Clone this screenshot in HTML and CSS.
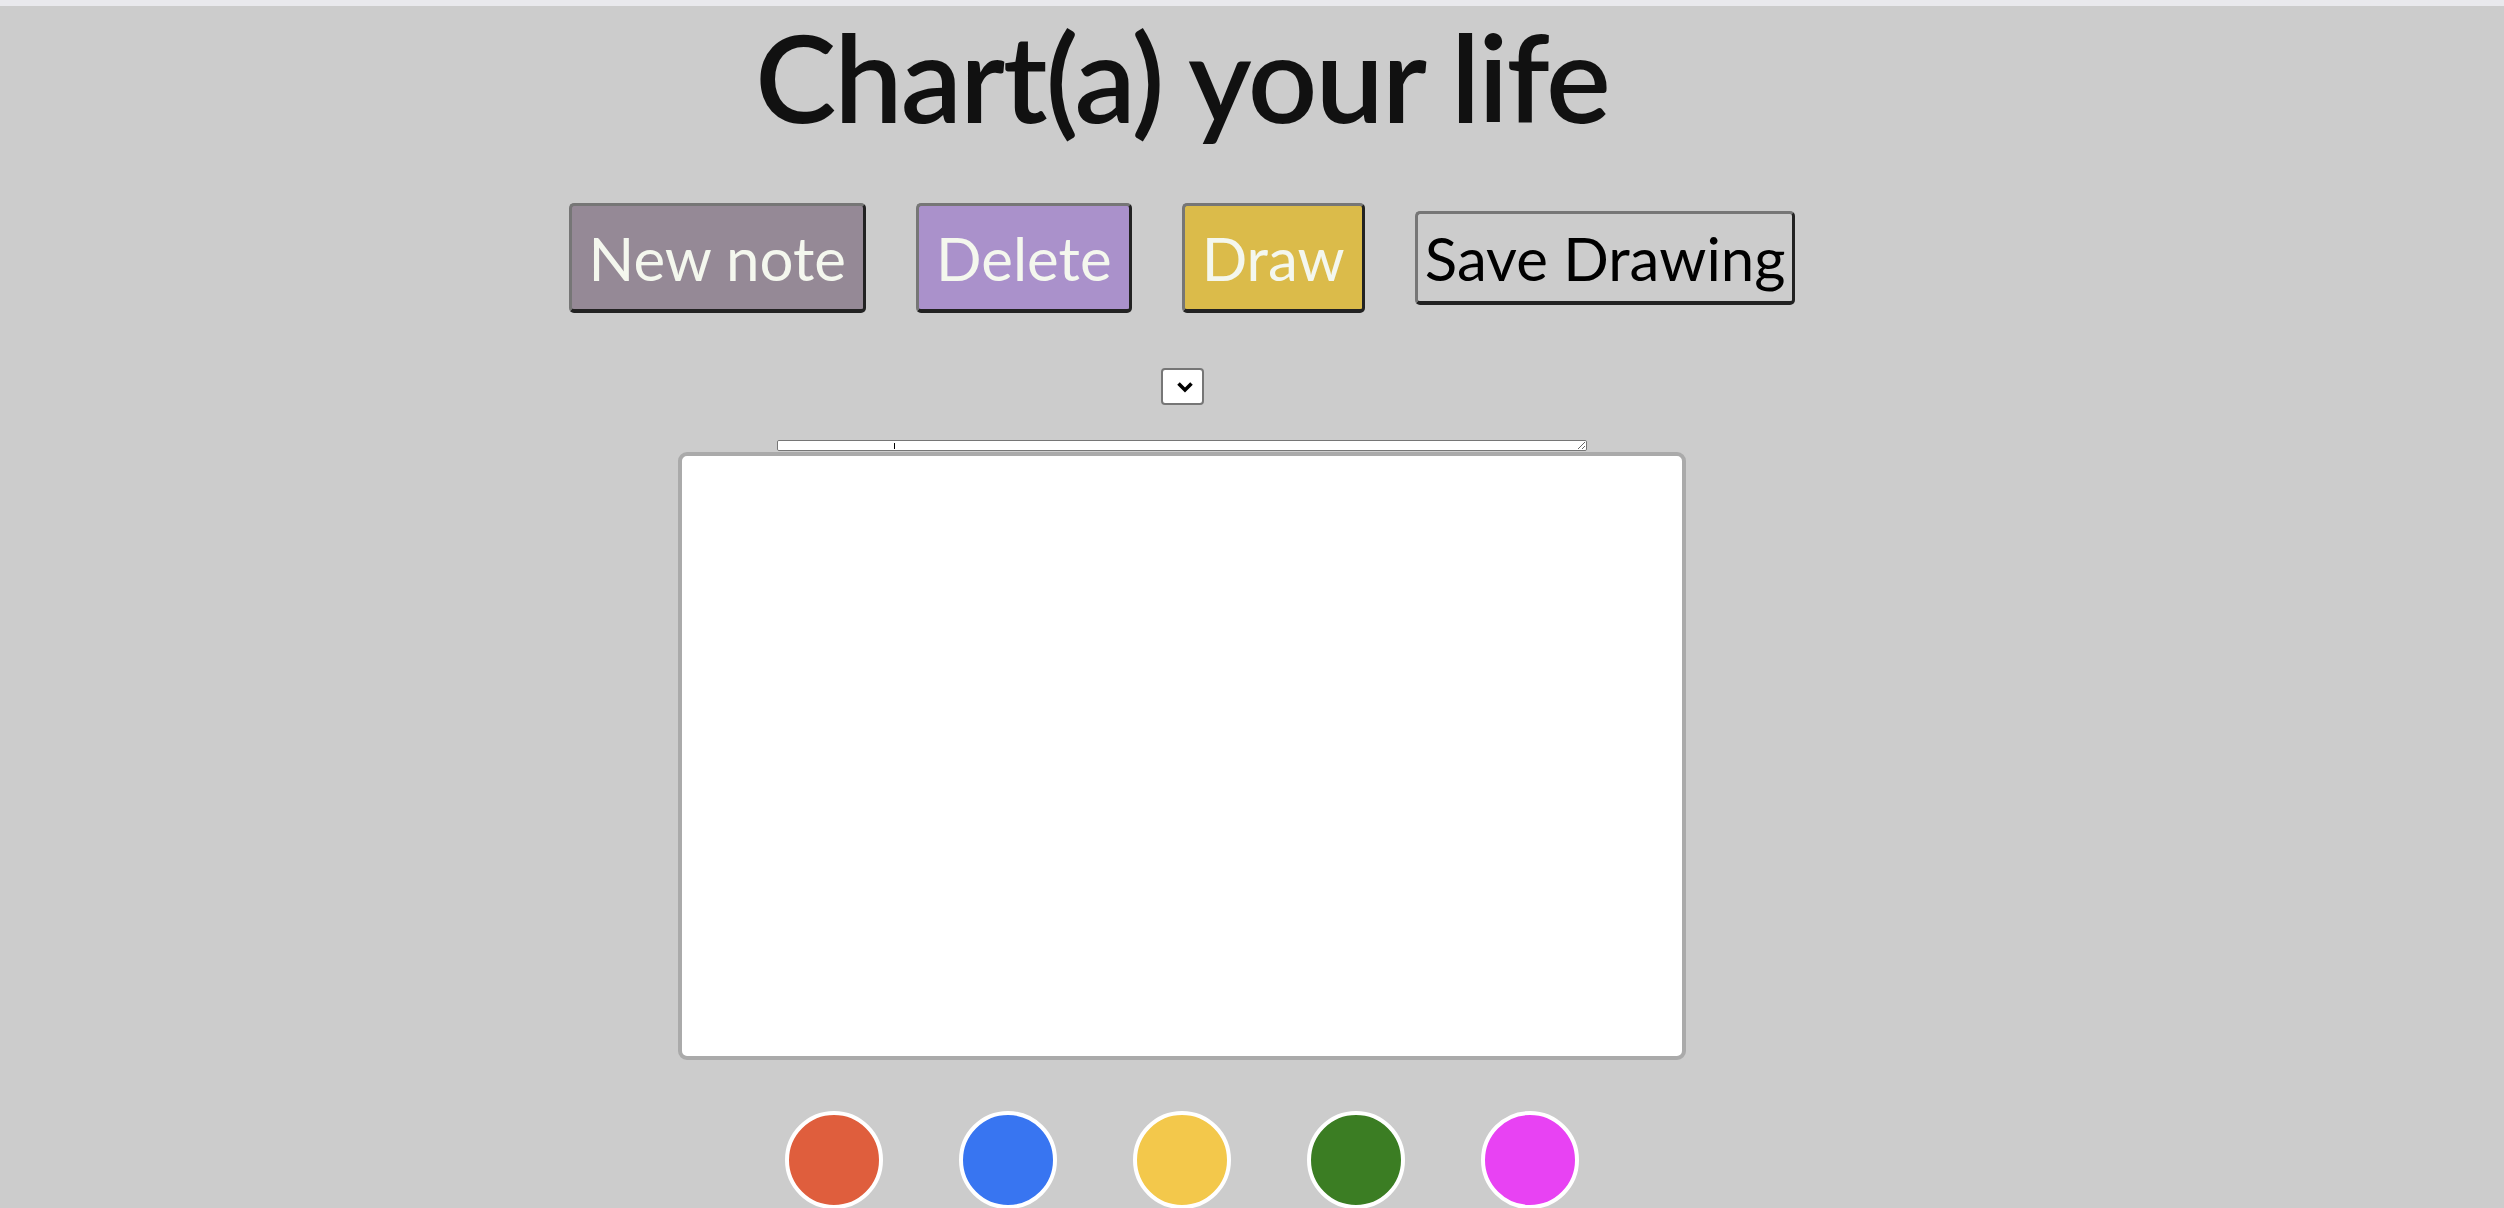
FILE: index.html
```html
<!DOCTYPE html>
<html lang="en">
<head>
<meta charset="utf-8">
<title>Chart(a) your life</title>
<link rel="stylesheet" href="styles.css">
</head>
<body>
<div class="strip"></div>
<main class="page">
  <h1 class="title">Chart(a) your life</h1>
  <div class="actions">
    <button class="btn btn-new">New note</button>
    <button class="btn btn-delete">Delete</button>
    <button class="btn btn-draw">Draw</button>
    <button class="btn btn-save">Save Drawing</button>
  </div>
  <div class="select" role="combobox" aria-label="Notes">
    <svg class="chev" width="18" height="12" viewBox="0 0 18 12"><path d="M2.5 2.5 L9 9 L15.5 2.5" fill="none" stroke="#000" stroke-width="3.6"/></svg>
  </div>
  <div class="note-wrap">
    <textarea class="note" aria-label="Note"></textarea>
    <span class="caret"></span>
  </div>
  <div class="canvas"></div>
  <div class="palette">
    <span class="swatch red"></span>
    <span class="swatch blue"></span>
    <span class="swatch yellow"></span>
    <span class="swatch green"></span>
    <span class="swatch magenta"></span>
  </div>
</main>
</body>
</html>
```

FILE: styles.css
```css
html, body {
  margin: 0;
  padding: 0;
  overflow: hidden;
  background: #cccccc;
}
body {
  font-family: Lato, "Liberation Sans", sans-serif;
}
.strip {
  height: 6px;
  background: #e9e9ed;
}
.page {
  width: 2364px;
  display: flex;
  flex-direction: column;
  align-items: center;
  background: #cccccc;
  min-height: 1300px;
}
.title {
  margin: 9px 0 0;
  font-size: 122px;
  line-height: 122px;
  font-weight: 600;
  letter-spacing: -2px;
  color: #111111;
}
.actions {
  margin-top: 66px;
  display: flex;
  align-items: center;
  gap: 50px;
}
.btn {
  font-family: Lato, "Liberation Sans", sans-serif;
  font-size: 60px;
  line-height: 72px;
  border-style: solid;
  border-width: 3px 3px 4px 3px;
  border-color: #767676 #222222 #222222 #767676;
  border-radius: 5px;
  padding: 16px 17px 15px;
  color: #f4f7ee;
  cursor: pointer;
}
.btn-new { background: #958996; }
.btn-delete { background: #aa91cb; }
.btn-draw { background: #dbbb4a; }
.btn-save {
  background: transparent;
  color: #000000;
  padding: 8px 7px 7px;
}
.select {
  margin-top: 55px;
  box-sizing: border-box;
  width: 43px;
  height: 37px;
  border: 2px solid #767676;
  border-radius: 4px;
  background: #ffffff;
  display: flex;
  align-items: center;
  justify-content: center;
  padding-left: 5px;
}
.note-wrap {
  position: relative;
  margin-top: 35px;
  height: 11px;
}
.note {
  display: block;
  box-sizing: border-box;
  width: 810px;
  height: 11px;
  margin: 0;
  padding: 0;
  border: 1px solid #767676;
  border-radius: 2px;
  background: #ffffff;
  font-family: Lato, "Liberation Sans", sans-serif;
}
.caret {
  position: absolute;
  left: 117px;
  top: 3px;
  width: 1px;
  height: 6px;
  background: #000000;
}
.canvas {
  margin-top: 1px;
  width: 1000px;
  height: 600px;
  border: 4px solid #aaaaaa;
  border-radius: 9px;
  background: #ffffff;
}
.palette {
  margin-top: 51px;
  display: flex;
  gap: 76px;
}
.swatch {
  box-sizing: border-box;
  width: 98px;
  height: 98px;
  border-radius: 50%;
  border: 4px solid #ffffff;
}
.red { background: #df5e3d; }
.blue { background: #3875f1; }
.yellow { background: #f3c84b; }
.green { background: #3b7d23; }
.magenta { background: #e842f3; }
```
